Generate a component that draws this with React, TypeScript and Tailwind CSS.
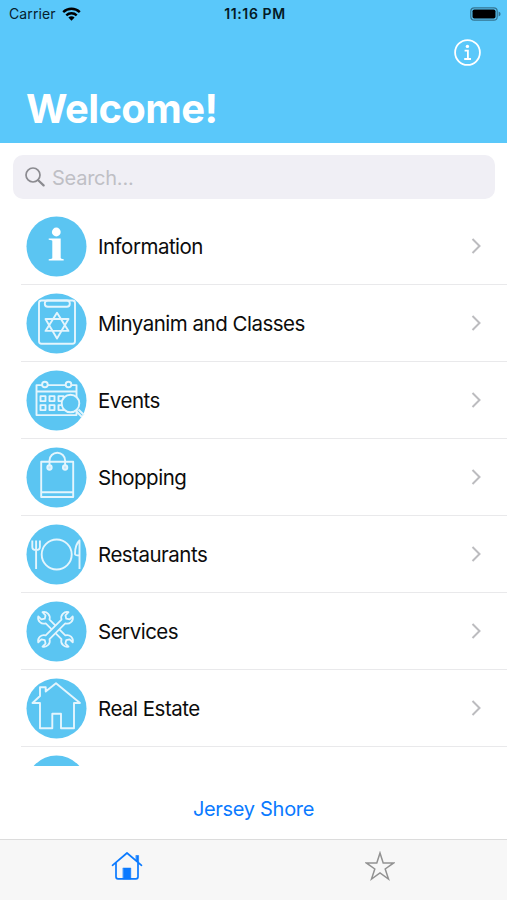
import { useState } from "react";
import type { ReactNode } from "react";

interface Category {
    id: string;
    name: string;
    icon: ReactNode;
}

const WRENCH = "M-2.9-12V12A6.3 6.3 0 0 0-3.2 23V18.3L0 16.3 3.2 18.3V23A6.3 6.3 0 0 0 2.9 12V-12A6.3 6.3 0 0 0 3.2-23V-18.3L0-16.3-3.2-18.3V-23A6.3 6.3 0 0 0-2.9-12z";

const categories: Category[] = [
    {
        id: "information",
        name: "Information",
        icon: (
            <g fill="white" stroke="none">
                <circle cx="29.8" cy="15.5" r="4.4" />
                <path d="M22.2 22h12v19.5q0 1 3 1.3V44h-15v-1.2q3.6-.3 3.6-1.3V24.5q0-1-3.6-1.3z" />
            </g>
        ),
    },
    {
        id: "minyanim",
        name: "Minyanim and Classes",
        icon: (
            <>
                <rect x="12.5" y="7" width="36" height="43.2" rx="2.5" />
                <rect x="18.3" y="7" width="25" height="6.2" rx="3" />
                <path d="M30.5 19.2 42 37.4H19zM30.5 44.9 19 25.5h23z" />
            </>
        ),
    },
    {
        id: "events",
        name: "Events",
        icon: (
            <>
                <path d="M15.5 14.6H10v30h40v-30h-5M21.5 14.6h17.5M10 21h40" />
                <circle cx="18.4" cy="14" r="2.8" />
                <circle cx="42" cy="14" r="2.8" />
                <path d="M14 25.6h5v5h-5zM23 25.6h5v5h-5zM32 25.6h5v5h-5zM14 34.6h5v5h-5zM23 34.6h5v5h-5zM32 34.6h5v5h-5z" />
                <circle cx="44" cy="33" r="8.8" fill="#5bc5f2" />
                <path d="m49.5 40.5 6 6M52 39l5.5 5.5" />
            </>
        ),
    },
    {
        id: "shopping",
        name: "Shopping",
        icon: (
            <>
                <path d="M14.7 14.3h32v35.2h-32zM14.7 44.8h32" />
                <path d="M23 19.5V13a7.8 7.8 0 0 1 15.6 0v6.5" />
                <circle cx="23" cy="20" r="2.2" fill="#bfe7fb" />
                <circle cx="38.6" cy="20" r="2.2" fill="#bfe7fb" />
            </>
        ),
    },
    {
        id: "restaurants",
        name: "Restaurants",
        icon: (
            <>
                <circle cx="30.2" cy="30" r="15" />
                <path d="M5.8 16v6.5q0 3 3.8 3t3.8-3V16M9.6 16v28.5" />
                <path d="M53 44.5V16q-4.5 4-4.5 13.5 0 1.5 4.5 1.5" />
            </>
        ),
    },
    {
        id: "services",
        name: "Services",
        icon: (
            <>
                <path transform="translate(29 27.9) rotate(-45) scale(0.93)" d={WRENCH} />
                <path transform="translate(29 27.9) rotate(45) scale(0.93)" fill="#5bc5f2" d={WRENCH} />
            </>
        ),
    },
    {
        id: "real-estate",
        name: "Real Estate",
        icon: (
            <path d="M29.5 4.8 53.5 24.5h-6v25.2h-13V35.3h-8.7v14.4H13.5V24.5H6L13.5 17.5V8.7h5.7V13z" />
        ),
    },
    { id: "more", name: "", icon: null },
];

function StatusBar() {
    return (
        <div className="grid grid-cols-3 items-center h-[27px] pl-[9px] pr-[6px] text-[14px] text-[#06212e]">
            <div className="flex items-center gap-[6px]">
                <span className="tracking-[0.1px]">Carrier</span>
                <svg className="w-[19px] h-[14px]" viewBox="0 0 19 14" fill="none" stroke="black" strokeWidth="2.4">
                    <path d="M1.2 5.2a11.8 11.8 0 0 1 16.6 0M4.3 8.4a7.4 7.4 0 0 1 10.4 0" />
                    <path d="M6.4 10.6a4.4 4.4 0 0 1 6.2 0L9.5 13.8z" fill="black" stroke="none" />
                </svg>
            </div>
            <span className="text-center font-semibold tracking-[0.6px] text-[#041a25]">11:16 PM</span>
            <svg className="w-[31px] h-[14px] justify-self-end" viewBox="0 0 31 14">
                <rect x="0.8" y="0.8" width="26.4" height="12.4" rx="3.5" fill="none" stroke="#347491" strokeWidth="1.2" />
                <rect x="2.5" y="2.5" width="23" height="9" rx="1.8" fill="black" />
                <path d="M28.6 4.6q2 .8 2 2.4t-2 2.4z" fill="#347491" />
            </svg>
        </div>
    );
}

function CategoryRow({ category }: { category: Category }) {
    return (
        <li className="flex items-center shrink-0 h-[77px] ml-[21px] pl-[5px] pr-[25px] border-b border-[#e9e9eb]">
            <svg className="w-[61px] h-[61px] shrink-0" viewBox="-0.5 -0.5 61 61" fill="none" stroke="#e4f5fd" strokeWidth="1.9" strokeLinejoin="round">
                <circle cx="30" cy="30" r="30" fill="#5bc5f2" stroke="none" />
                {category.icon}
            </svg>
            <span className="flex-1 ml-[11px] pt-[2px] text-[20.5px] tracking-[-0.5px] text-[#0c0c0c]">{category.name}</span>
            {category.name && (
                <svg className="w-[11px] h-[16px]" viewBox="0 0 11 16" fill="none" stroke="#bcbcbf" strokeWidth="2">
                    <path d="m1.5 1 7 7-7 7" />
                </svg>
            )}
        </li>
    );
}

export default function App() {
    const [search, setSearch] = useState("");
    const visible = categories.filter((c) => c.name.toLowerCase().includes(search.toLowerCase()));

    return (
        <div className="flex flex-col w-[507px] h-[900px] overflow-hidden bg-white font-['Inter',sans-serif]">
            <header className="h-[143px] shrink-0 bg-[#5ac8fa]">
                <StatusBar />
                <div className="flex justify-end pt-[12px] pr-[26px]">
                    <button aria-label="Info">
                        <svg className="block w-[27px] h-[27px]" viewBox="0 0 27 27" fill="none" stroke="white" strokeWidth="1.8">
                            <circle cx="13.5" cy="13.5" r="12.4" />
                            <circle cx="13.4" cy="7.4" r="1.7" fill="white" stroke="none" />
                            <path d="M10.6 11.6h3.3v8M10.2 20h6.8" />
                        </svg>
                    </button>
                </div>
                <h1 className="ml-[26px] mt-[18px] text-[40px] leading-[50px] font-bold tracking-[-0.6px] text-white">Welcome!</h1>
            </header>

            <div className="flex items-center shrink-0 h-[44px] mt-[12px] ml-[13px] mr-[12px] pl-[12px] rounded-[10px] bg-[#f0eff5]">
                <svg className="w-[20px] h-[20px] shrink-0" viewBox="0 0 20 20" fill="none" stroke="#8b8b90" strokeWidth="1.7" strokeLinecap="round">
                    <circle cx="8" cy="8" r="7" />
                    <path d="m13.2 13.2 5.4 5.2" strokeWidth="2.2" />
                </svg>
                <input
                    type="text"
                    value={search}
                    onChange={(e) => setSearch(e.target.value)}
                    placeholder="Search..."
                    className="flex-1 ml-[7px] pt-px text-[20px] tracking-[-0.25px] outline-none placeholder:text-[#bfbfc5]"
                />
            </div>

            <ul className="flex flex-col h-[558px] mt-[9px] shrink-0 overflow-hidden">
                {visible.map((category) => (
                    <CategoryRow key={category.id} category={category} />
                ))}
            </ul>

            <div className="flex flex-1 items-center justify-center pt-[12px]">
                <button className="text-[20px] tracking-[-0.3px] text-[#0a7aff]">Jersey Shore</button>
            </div>

            <nav className="grid grid-cols-2 justify-items-center shrink-0 h-[61px] pt-[11px] border-t border-[#dcdcdc] bg-[#f7f7f7]">
                <button aria-label="Home" className="w-[32px] h-[30px]">
                    <svg className="w-[32px] h-[30px]" viewBox="0 0 32 30" fill="none" stroke="#0a7aff" strokeWidth="1.7" strokeLinejoin="round" strokeLinecap="round">
                        <path d="M1.5 14.3 16 2l14.5 12.3M5 11.8v14q0 2 2 2h18q2 0 2-2v-14" />
                        <path d="M25.2 4.5h2.4v7l-2.4-2z" fill="#0a7aff" strokeWidth="0.6" />
                        <path d="M12.2 17h7.6v11h-7.6z" fill="#0a7aff" strokeWidth="0.5" />
                    </svg>
                </button>
                <button aria-label="Favorites" className="w-[30px] h-[30px]">
                    <svg className="w-[30px] h-[30px]" viewBox="0 0 30 30" fill="none" stroke="#929292" strokeWidth="1.5">
                        <path d="m15 2 3.2 9.9h10.5L20.2 18l3.3 10-8.5-6.1L6.5 28l3.3-10-8.5-6.1h10.5z" />
                    </svg>
                </button>
            </nav>
        </div>
    );
}
